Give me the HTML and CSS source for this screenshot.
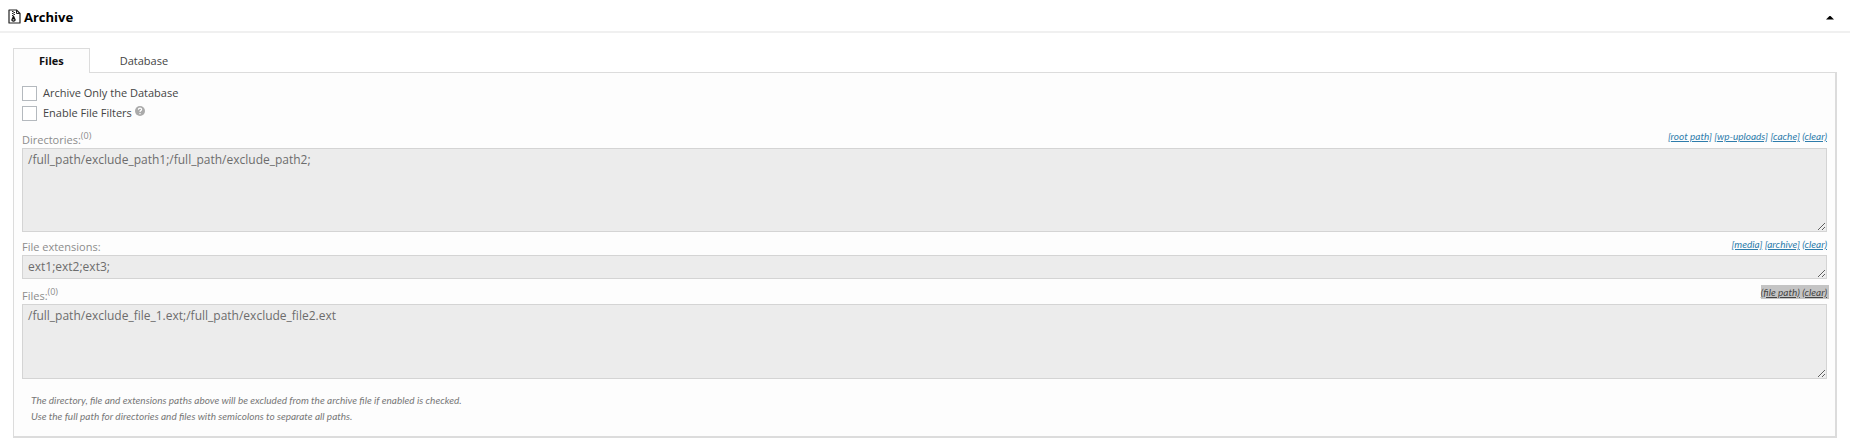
FILE: index.html
```html
<!DOCTYPE html>
<html lang="en">
<head>
    <meta charset="UTF-8">
    <title>Archive</title>
    <link rel="stylesheet" href="styles.css">
</head>
<body>
<div class="box">
    <div class="box-title">
        <svg class="icon-archive" width="13" height="15" viewBox="0 0 13 15">
            <path d="M1 1h7.500L12 4.500V14H1z" fill="#fff" stroke="#222" stroke-width="1.200" stroke-linejoin="round"/>
            <path d="M8.500 1v3.500H12" fill="none" stroke="#222"/>
            <path d="M4 2h1.500v1H4zM5.500 3H7v1H5.500zM4 4h1.500v1H4zM5.500 5H7v1H5.500zM4 6h1.500v1H4z" fill="#222"/>
            <path d="M4.900 7h1.200l1.500 3.500c.3 1.300-.7 2.200-2.100 2.200s-2.400-.9-2.100-2.200z" fill="#111"/>
            <path d="M4.700 10.900h1.600" stroke="#fff"/>
        </svg>
        <h1>Archive</h1>
        <button class="box-arrow" type="button" aria-label="Toggle"></button>
    </div>
    <form class="box-panel">
        <div class="tabs">
            <button class="tab active" type="button">Files</button>
            <button class="tab" type="button">Database</button>
        </div>
        <div class="tab-content">
            <div class="check">
                <input type="checkbox" id="db-only">
                <label for="db-only">Archive Only the Database</label>
            </div>
            <div class="check">
                <input type="checkbox" id="filter-on">
                <label for="filter-on">Enable File Filters</label>
                <svg class="icon-help" width="10" height="10" viewBox="0 0 10 10">
                    <circle cx="5" cy="5" r="5" fill="#aaa"/>
                    <path d="M3.400 3.800C3.400 1.600 6.700 1.700 6.600 3.700 6.500 4.700 5 4.600 5 6M5 7v1.300" fill="none" stroke="#fff" stroke-width="1.200"/>
                </svg>
            </div>

            <div class="field-head">
                <label for="dirs">Directories:<sup>(0)</sup></label>
                <div class="quick-links"><a href="#">[root path]</a> <a href="#">[wp-uploads]</a> <a href="#">[cache]</a> <a href="#">(clear)</a></div>
            </div>
            <textarea id="dirs" class="dirs" disabled>/full_path/exclude_path1;/full_path/exclude_path2;</textarea>

            <div class="field-head short">
                <label for="exts">File extensions:</label>
                <div class="quick-links"><a href="#">[media]</a> <a href="#">[archive]</a> <a href="#">(clear)</a></div>
            </div>
            <textarea id="exts" class="exts" disabled>ext1;ext2;ext3;</textarea>

            <div class="field-head">
                <label for="files">Files:<sup>(0)</sup></label>
                <div class="quick-links selected"><a href="#">(file path)</a> <a href="#">(clear)</a></div>
            </div>
            <textarea id="files" class="files" disabled>/full_path/exclude_file_1.ext;/full_path/exclude_file2.ext</textarea>

            <p class="help">The directory, file and extensions paths above will be excluded from the archive file if enabled is checked.<br>
            Use the full path for directories and files with semicolons to separate all paths.</p>
        </div>
    </form>
</div>
</body>
</html>
```
FILE: styles.css
```css
*{box-sizing:border-box;}
body{margin:0; background:#fff; color:#444; font:11px/20px "Open Sans","Noto Sans",sans-serif;}
button{font:inherit; color:inherit; background:none; border:0; margin:0; padding:0;}

.box-title{display:flex; align-items:center; height:33px; padding:2px 16px 0 8px; border-bottom:2px solid #f0f0f0;}
.box-title h1{flex:1; margin:0 0 0 3px; font-size:13px; line-height:20px; color:#000;}
.box-arrow{width:8px; height:4px; margin-top:2px; background:#000; clip-path:polygon(50% 0,100% 100%,0 100%);}

.box-panel{padding:15px 13px 8px;}
.tabs{display:flex; position:relative; z-index:1; margin-bottom:-1px;}
.tab{height:25px; padding:0 29px; border:1px solid transparent; border-bottom:0;}
.tab.active{padding:0 25px; border-color:#dcdcdc; background:#fdfdfd; color:#111; font-weight:bold;}
.tab-content{padding:10px 8px 12px; border:1px solid #dcdcdc; border-right-width:2px; border-bottom-width:2px; background:#fdfdfd;}

.check{display:flex; align-items:center; height:20px;}
.check input{appearance:none; width:15px; height:15px; margin:0 6px 0 0; border:1px solid #b4b9be; background:#fff;}
.icon-help{margin:0 0 4px 3px;}

.field-head{display:flex; justify-content:space-between; height:25px; color:#8c8c8c;}
.field-head.short{height:23px;}
.field-head label{align-self:flex-end; line-height:17px;}
.field-head sup{font-size:9px; line-height:0;}
.quick-links{align-self:center; font:italic 10px/14px Lato,"Open Sans",sans-serif;}
.quick-links a{color:#2e7cab;}
.quick-links.selected{margin-right:-2px; padding-right:2px; background:#c4c4c4;}
.quick-links.selected a{color:#444;}

textarea{display:block; width:100%; margin:0; padding:1px 5px; border:1px solid #d4d4d4; border-radius:0; background:#ececec; color:#6c6c6c; font:12px/20px "Open Sans","Noto Sans",sans-serif; overflow:hidden;}
.dirs{height:84px;}
.exts{height:24px;}
.files{height:75px;}

.help{margin:13px 0 0; padding-left:9px; font:italic 10px/16px Lato,"Open Sans",sans-serif; color:#777;}
```
